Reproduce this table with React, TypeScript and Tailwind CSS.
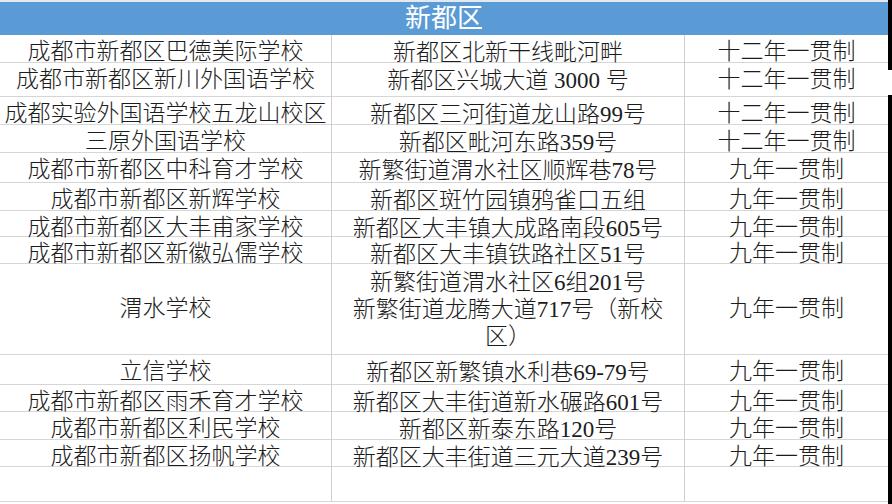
import React from "react";

type Row = { h: number; a: string; b: string[]; c: string };

const rows: Row[] = [
  { h: 28, a: "成都市新都区巴德美际学校", b: ["新都区北新干线毗河畔"], c: "十二年一贯制" },
  { h: 34, a: "成都市新都区新川外国语学校", b: ["新都区兴城大道 3000 号"], c: "十二年一贯制" },
  { h: 28, a: "成都实验外国语学校五龙山校区", b: ["新都区三河街道龙山路99号"], c: "十二年一贯制" },
  { h: 28, a: "三原外国语学校", b: ["新都区毗河东路359号"], c: "十二年一贯制" },
  { h: 30, a: "成都市新都区中科育才学校", b: ["新繁街道渭水社区顺辉巷78号"], c: "九年一贯制" },
  { h: 28, a: "成都市新都区新辉学校", b: ["新都区斑竹园镇鸦雀口五组"], c: "九年一贯制" },
  { h: 26, a: "成都市新都区大丰甫家学校", b: ["新都区大丰镇大成路南段605号"], c: "九年一贯制" },
  { h: 27, a: "成都市新都区新徽弘儒学校", b: ["新都区大丰镇铁路社区51号"], c: "九年一贯制" },
  {
    h: 91,
    a: "渭水学校",
    b: ["新繁街道渭水社区6组201号", "新繁街道龙腾大道717号（新校", "区）"],
    c: "九年一贯制",
  },
  { h: 30, a: "立信学校", b: ["新都区新繁镇水利巷69-79号"], c: "九年一贯制" },
  { h: 27, a: "成都市新都区雨禾育才学校", b: ["新都区大丰街道新水碾路601号"], c: "九年一贯制" },
  { h: 28, a: "成都市新都区利民学校", b: ["新都区新泰东路120号"], c: "九年一贯制" },
  { h: 27, a: "成都市新都区扬帆学校", b: ["新都区大丰街道三元大道239号"], c: "九年一贯制" },
];

export default function App() {
  return (
    <div className="w-[892px] h-[504px] overflow-hidden bg-white flex [font-family:'Liberation_Serif','Noto_Sans_CJK_SC',serif] text-[#1c1c1c]">
      <div className="w-[888px] flex flex-col">
        <div className="h-[2px] bg-[#e3e9ef]" />
        <div className="h-[33px] bg-[#5b9bd5] flex items-center justify-center text-white text-[26px] leading-none">
          新都区
        </div>
        {rows.map((r, i) => (
          <div
            key={i}
            className="grid grid-cols-[332px_353px_203px] border-b border-[#d6d6d6] text-[23px] font-light"
            style={{ height: r.h }}
          >
            <div className="border-r border-[#cfcfcf] flex items-center justify-center whitespace-nowrap">
              {r.a}
            </div>
            <div className="border-r border-[#cfcfcf] flex flex-col items-center justify-center whitespace-nowrap leading-[27px]">
              {r.b.map((t, j) => (
                <span key={j}>{t}</span>
              ))}
            </div>
            <div className="flex items-center justify-center whitespace-nowrap">{r.c}</div>
          </div>
        ))}
        <div className="flex-1 grid grid-cols-[332px_353px_203px] border-b border-[#d6d6d6]">
          <div className="border-r border-[#cfcfcf]" />
          <div className="border-r border-[#cfcfcf]" />
          <div />
        </div>
        <div className="h-[2px]" />
      </div>
      <div className="w-[4px] flex flex-col">
        <div className="h-[70px] bg-black" />
        <div className="h-[25px] bg-white" />
        <div className="flex-1 bg-black" />
      </div>
    </div>
  );
}
